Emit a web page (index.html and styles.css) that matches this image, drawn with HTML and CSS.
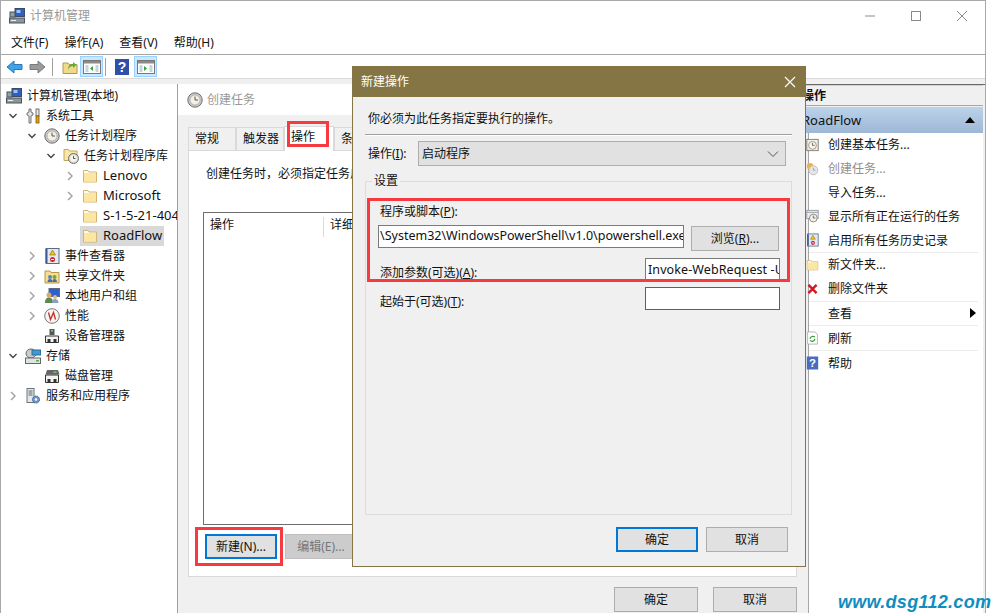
FILE: index.html
```html
<!DOCTYPE html>
<html lang="zh-CN">

<head>
    <meta charset="UTF-8">
    <title>计算机管理</title>
    <link rel="stylesheet" href="styles.css">
</head>

<body>
    <svg class="defs" width="0" height="0">
        <symbol id="computer" viewBox="0 0 16 16">
            <rect x="6" y="0.5" width="9.5" height="8" fill="#2f5fc4" stroke="#3a4a6a" />
            <rect x="7.5" y="2" width="4" height="3" fill="#9cc4f0" />
            <rect x="1" y="4" width="5" height="5" fill="#8fa0a8" stroke="#45545c" />
            <rect x="0.5" y="10" width="15" height="5" fill="#8d979a" stroke="#4c5558" />
            <path d="M2 12.5h5" stroke="#eee" />
        </symbol>
        <symbol id="tools" viewBox="0 0 16 16">
            <path d="M4 1v3l-2 1v2l2 1v7h2V8l2-1V5L6 4V1z" fill="#dfe2e4" stroke="#555" stroke-width=".8" />
            <rect x="11" y="1" width="3" height="7" fill="#e5e7e8" stroke="#555" stroke-width=".8" />
            <rect x="11" y="8" width="3" height="7" fill="#e0a010" stroke="#7a5a10" stroke-width=".8" />
        </symbol>
        <symbol id="clock" viewBox="0 0 16 16">
            <circle cx="8" cy="8" r="7.2" fill="#c9c9c9" stroke="#6f6f6f" />
            <circle cx="8" cy="8" r="5" fill="#f4f1e4" stroke="#999" stroke-width=".6" />
            <path d="M8 4.5V8h3" fill="none" stroke="#555" />
        </symbol>
        <symbol id="folder" viewBox="0 0 16 16">
            <path d="M1.500 2.500h4.500l1 1.500h7.500v10h-13z" fill="#fffbe8" stroke="#d2b570" />
            <rect x="2" y="5" width="12" height="8.500" fill="#fbe6a2" />
        </symbol>
        <symbol id="folderclock" viewBox="0 0 16 16">
            <path d="M1 1.500h4.500l1 1.500h7.500v9.500H1z" fill="#fbe6a2" stroke="#c2a562" />
            <circle cx="10.500" cy="10.500" r="5" fill="#d9d9d9" stroke="#6f6f6f" />
            <circle cx="10.500" cy="10.500" r="3.300" fill="#f7f4e8" />
            <path d="M10.500 8v2.500h2" fill="none" stroke="#555" />
        </symbol>
        <symbol id="taskwin" viewBox="0 0 16 16">
            <rect x="1" y="1" width="14" height="14" fill="#efeee8" stroke="#7a6a58" />
            <circle cx="8" cy="8.500" r="4.800" fill="#f7f4e8" stroke="#8a8a8a" />
            <path d="M8 5.500v3h2.500" fill="none" stroke="#555" />
        </symbol>
        <symbol id="tasksun" viewBox="0 0 16 16">
            <circle cx="5" cy="4.500" r="4" fill="#eeb14a" />
            <circle cx="9" cy="9.500" r="5.500" fill="#e6e6e6" stroke="#b5b5b5" />
            <path d="M9 6.500v3h2.500" fill="none" stroke="#999" />
        </symbol>
        <symbol id="runlist" viewBox="0 0 16 16">
            <rect x="1" y="1" width="14" height="10" fill="#eef1f4" stroke="#8a8f96" />
            <path d="M1 3.500h14" stroke="#8a8f96" />
            <circle cx="9" cy="10.500" r="4.800" fill="#f4f1e4" stroke="#777" />
            <path d="M9 7.500v3h2.500" fill="none" stroke="#555" />
        </symbol>
        <symbol id="event" viewBox="0 0 16 16">
            <rect x="2" y="0.500" width="13" height="15" fill="#e3e9f2" stroke="#5a6a88" />
            <path d="M2.500 1v14" stroke="#3c5a9a" stroke-width="2" />
            <path d="M8.500 2l3 5h-6z" fill="#f0c020" stroke="#8a6a10" stroke-width=".6" />
            <circle cx="8.500" cy="11.500" r="2.500" fill="#c9282d" />
            <path d="M7 11.500h3" stroke="#fff" />
        </symbol>
        <symbol id="share" viewBox="0 0 16 16">
            <path d="M1 3h5l1 1.500h8v10.500H1z" fill="#f7dd8e" stroke="#b8964a" />
            <circle cx="6" cy="9" r="2" fill="#5a86c8" />
            <circle cx="10.500" cy="9" r="2" fill="#6aa84f" />
            <path d="M3.500 14c0-2 1-3 2.500-3s2.500 1 2.500 3zM8.500 14c0-2 .5-3 2-3s2.500 1 2.500 3z" fill="#4a6fa8" />
        </symbol>
        <symbol id="users" viewBox="0 0 16 16">
            <rect x="5" y="0.500" width="10.500" height="8" fill="#2f62c8" stroke="#5a6a88" />
            <circle cx="5" cy="7" r="2.500" fill="#d8a878" />
            <path d="M1 15c0-4 1.500-5.500 4-5.500s4 1.500 4 5.500z" fill="#5d8a4a" />
            <circle cx="11" cy="9" r="2" fill="#e0b890" />
            <path d="M8 15c0-2.500 1-4 3-4s3.500 1.500 3.500 4z" fill="#8aa0c0" />
        </symbol>
        <symbol id="perf" viewBox="0 0 16 16">
            <circle cx="8" cy="8" r="7.300" fill="#f5f5f0" stroke="#777" />
            <path d="M4.500 4.500l2 7 3-7 2 7" fill="none" stroke="#c92a2a" stroke-width="1.300" />
        </symbol>
        <symbol id="device" viewBox="0 0 16 16">
            <rect x="5.500" y="1" width="5" height="6" fill="#555" />
            <rect x="7" y="2" width="2" height="1.500" fill="#7ad07a" />
            <path d="M1.500 8h13v6.500h-13z" fill="#f3f3f3" stroke="#333" />
            <rect x="3.500" y="11" width="3" height="3.500" fill="#333" />
            <rect x="9.500" y="11" width="3" height="3.500" fill="#333" />
        </symbol>
        <symbol id="storage" viewBox="0 0 16 16">
            <ellipse cx="6" cy="5.500" rx="5" ry="4.500" fill="#c8ced0" stroke="#666" />
            <rect x="7" y="2" width="8.500" height="5" fill="#3d9ad0" stroke="#2b6f9a" />
            <rect x="0.500" y="10" width="15" height="5.500" fill="#dfe3e4" stroke="#666" />
            <rect x="11" y="12" width="3" height="1.500" fill="#55b055" />
        </symbol>
        <symbol id="disk" viewBox="0 0 16 16">
            <path d="M3 2h11l1.500 4.500H1.500z" fill="#666" />
            <rect x="9.500" y="3.500" width="3" height="1.300" fill="#7ad07a" />
            <path d="M1.500 7h13v7.500h-13z" fill="#f3f3f3" stroke="#333" />
            <rect x="3.500" y="11" width="3" height="3.500" fill="#333" />
            <rect x="9.500" y="11" width="3" height="3.500" fill="#333" />
        </symbol>
        <symbol id="services" viewBox="0 0 16 16">
            <rect x="2" y="0.500" width="7" height="14" fill="#e4e8ea" stroke="#6a7478" />
            <path d="M3.500 3h4M3.500 5h4M3.500 7h4" stroke="#5a6468" />
            <circle cx="11" cy="11.500" r="3.500" fill="#6d97c9" stroke="#3e5f8c" stroke-dasharray="1.500 .6" />
            <circle cx="11" cy="11.500" r="1.200" fill="#fff" />
        </symbol>
        <symbol id="chev" viewBox="0 0 10 10">
            <path d="M1.500 3L5 6.500 8.500 3" fill="none" stroke="#444" stroke-width="1.400" />
        </symbol>
        <symbol id="chevr" viewBox="0 0 10 10">
            <path d="M3 1l4 4-4 4" fill="none" stroke="#a6a6a6" stroke-width="1.500" />
        </symbol>
    </svg>

    <div class="window">
        <div class="titlebar">
            <svg class="ico"><use href="#computer" /></svg>
            <span class="title-text">计算机管理</span>
            <div class="win-ctrls">
                <svg width="12" height="12" viewBox="0 0 12 12"><path d="M1 6h10" stroke="#8a8a8a" /></svg>
                <svg width="12" height="12" viewBox="0 0 12 12"><rect x="1.500" y="1.500" width="9" height="9" fill="none" stroke="#8a8a8a" /></svg>
                <svg width="12" height="12" viewBox="0 0 12 12"><path d="M1 1l10 10M11 1L1 11" stroke="#8a8a8a" /></svg>
            </div>
        </div>
        <div class="menubar">
            <span>文件(F)</span>
            <span>操作(A)</span>
            <span>查看(V)</span>
            <span>帮助(H)</span>
        </div>
        <div class="toolbar">
            <svg class="tb-arrow" viewBox="0 0 17 14"><path d="M1 7l7-6v3.500h8v5H8V13z" fill="#3ea3e8" stroke="#2a78b8" /></svg>
            <svg class="tb-arrow" viewBox="0 0 17 14"><path d="M16 7L9 1v3.500H1v5h8V13z" fill="#9a9a9a" stroke="#7a7a7a" /></svg>
            <i class="tb-sep"></i>
            <svg class="ico tb-up" viewBox="0 0 16 16"><path d="M1 4h5l1 1.500h8v9H1z" fill="#f2d98a" stroke="#b09a50" /><path d="M6 11c0-4 2-6 5-6V3l3.500 3L11 9V7c-2 0-4 1-5 4z" fill="#5cae3c" /></svg>
            <div class="tb-btn">
                <svg width="18" height="14" viewBox="0 0 18 14"><rect x=".5" y=".5" width="17" height="13" fill="#fff" stroke="#777" /><rect x="1" y="1" width="16" height="2.500" fill="#8a8a8a" /><rect x="2.500" y="5" width="3" height="7" fill="#c8d4dc" /><rect x="12.500" y="5" width="3" height="7" fill="#c8d4dc" /><path d="M10 6v5L7 8.500z" fill="#3aa03a" /></svg>
            </div>
            <i class="tb-sep tb-sep2"></i>
            <svg class="tb-help" viewBox="0 0 14 16"><rect width="14" height="16" fill="#2f4fa8" /><text x="7" y="13" text-anchor="middle" class="help-q">?</text></svg>
            <div class="tb-btn tb-btn2">
                <svg width="18" height="14" viewBox="0 0 18 14"><rect x=".5" y=".5" width="17" height="13" fill="#fff" stroke="#777" /><rect x="1" y="1" width="16" height="2.500" fill="#8a8a8a" /><rect x="2.500" y="5" width="3" height="7" fill="#c8d4dc" /><rect x="12.500" y="5" width="3" height="7" fill="#c8d4dc" /><path d="M7 6v5l3-2.500z" fill="#3aa03a" /></svg>
            </div>
        </div>

        <div class="panes">
            <div class="tree">
                <div class="node l0"><svg class="ico"><use href="#computer" /></svg><span>计算机管理(本地)</span></div>
                <div class="node l1"><svg class="chev"><use href="#chev" /></svg><svg class="ico"><use href="#tools" /></svg><span>系统工具</span></div>
                <div class="node l2"><svg class="chev"><use href="#chev" /></svg><svg class="ico"><use href="#clock" /></svg><span>任务计划程序</span></div>
                <div class="node l3"><svg class="chev"><use href="#chev" /></svg><svg class="ico"><use href="#folderclock" /></svg><span>任务计划程序库</span></div>
                <div class="node l4"><svg class="chev"><use href="#chevr" /></svg><svg class="ico"><use href="#folder" /></svg><span class="lat">Lenovo</span></div>
                <div class="node l4"><svg class="chev"><use href="#chevr" /></svg><svg class="ico"><use href="#folder" /></svg><span class="lat">Microsoft</span></div>
                <div class="node l4"><i class="chev"></i><svg class="ico"><use href="#folder" /></svg><span class="lat">S-1-5-21-404</span></div>
                <div class="node l4"><i class="chev"></i><div class="sel"><svg class="ico"><use href="#folder" /></svg><span class="lat">RoadFlow</span></div></div>
                <div class="node l2"><svg class="chev"><use href="#chevr" /></svg><svg class="ico"><use href="#event" /></svg><span>事件查看器</span></div>
                <div class="node l2"><svg class="chev"><use href="#chevr" /></svg><svg class="ico"><use href="#share" /></svg><span>共享文件夹</span></div>
                <div class="node l2"><svg class="chev"><use href="#chevr" /></svg><svg class="ico"><use href="#users" /></svg><span>本地用户和组</span></div>
                <div class="node l2"><svg class="chev"><use href="#chevr" /></svg><svg class="ico"><use href="#perf" /></svg><span>性能</span></div>
                <div class="node l2"><i class="chev"></i><svg class="ico"><use href="#device" /></svg><span>设备管理器</span></div>
                <div class="node l1"><svg class="chev"><use href="#chev" /></svg><svg class="ico"><use href="#storage" /></svg><span>存储</span></div>
                <div class="node l2"><i class="chev"></i><svg class="ico"><use href="#disk" /></svg><span>磁盘管理</span></div>
                <div class="node l1"><svg class="chev"><use href="#chevr" /></svg><svg class="ico"><use href="#services" /></svg><span>服务和应用程序</span></div>
            </div>

            <div class="middle">
                <div class="mid-head">
                    <svg class="ico"><use href="#clock" /></svg>
                    <span>创建任务</span>
                </div>
                <div class="tabs">
                    <span class="tab">常规</span>
                    <span class="tab">触发器</span>
                    <span class="tab active">操作</span>
                    <span class="tab">条件</span>
                </div>
                <div class="tab-panel">
                    <p class="panel-text">创建任务时，必须指定任务启</p>
                    <div class="list">
                        <div class="list-head">
                            <span class="col-a">操作</span>
                            <span class="col-b">详细信息</span>
                        </div>
                    </div>
                    <div class="list-btns">
                        <button class="btn btn-focus new-btn">新建(N)...</button>
                        <button class="btn btn-off">编辑(E)...</button>
                    </div>
                </div>
                <div class="mid-foot">
                    <button class="btn foot-btn">确定</button>
                    <button class="btn foot-btn">取消</button>
                </div>
            </div>

            <div class="actions">
                <div class="act-head">操作</div>
                <div class="act-group"><span class="lat">RoadFlow</span><i class="up-tri"></i></div>
                <div class="act-list">
                    <div class="act"><svg class="ico"><use href="#taskwin" /></svg><span>创建基本任务...</span></div>
                    <div class="act muted"><svg class="ico"><use href="#tasksun" /></svg><span>创建任务...</span></div>
                    <div class="act"><i class="ico"></i><span>导入任务...</span></div>
                    <div class="act"><svg class="ico"><use href="#runlist" /></svg><span>显示所有正在运行的任务</span></div>
                    <div class="act"><svg class="ico"><use href="#event" /></svg><span>启用所有任务历史记录</span></div>
                    <i class="act-sep"></i>
                    <div class="act"><svg class="ico"><use href="#folder" /></svg><span>新文件夹...</span></div>
                    <div class="act"><svg class="ico" viewBox="0 0 16 16"><path d="M3 3l10 10M13 3L3 13" stroke="#d01c24" stroke-width="3" /></svg><span>删除文件夹</span></div>
                    <i class="act-sep"></i>
                    <div class="act"><i class="ico"></i><span>查看</span><i class="more-tri"></i></div>
                    <i class="act-sep"></i>
                    <div class="act"><svg class="ico" viewBox="0 0 16 16"><path d="M2 .5h9l3 3v12H2z" fill="#fff" stroke="#aaa" /><path d="M5 9a3.500 3.500 0 0 1 6-2M11 9a3.500 3.500 0 0 1-6 2" fill="none" stroke="#3aa03a" stroke-width="1.500" /></svg><span>刷新</span></div>
                    <i class="act-sep"></i>
                    <div class="act"><svg class="ico" viewBox="0 0 16 16"><rect x="1" width="14" height="16" fill="#4a6cc0" /><text x="8" y="13" text-anchor="middle" class="help-q">?</text></svg><span>帮助</span></div>
                </div>
            </div>
        </div>

        <!-- 红框标注 -->
        <i class="mark mark-tab"></i>
        <i class="mark mark-new"></i>

        <div class="dialog">
            <div class="dlg-title">
                <span>新建操作</span>
                <svg width="12" height="12" viewBox="0 0 12 12"><path d="M1 1l10 10M11 1L1 11" stroke="#fff" stroke-width="1.200" /></svg>
            </div>
            <div class="dlg-body">
                <p class="dlg-intro">你必须为此任务指定要执行的操作。</p>
                <hr class="dlg-rule">
                <div class="dlg-op">
                    <label>操作(<u>I</u>):</label>
                    <div class="select"><span>启动程序</span><svg width="12" height="8" viewBox="0 0 12 8"><path d="M1 1.500l5 5 5-5" fill="none" stroke="#555" /></svg></div>
                </div>
                <fieldset class="settings">
                    <legend>设置</legend>
                    <div class="field-label">程序或脚本(<u>P</u>):</div>
                    <div class="prog-row">
                        <div class="tinput prog-input">\System32\WindowsPowerShell\v1.0\powershell.exe</div>
                        <button class="btn browse">浏览(<u>R</u>)...</button>
                    </div>
                    <div class="pair-row">
                        <div class="field-label">添加参数(可选)(<u>A</u>):</div>
                        <div class="tinput short">Invoke-WebRequest -U</div>
                    </div>
                    <div class="pair-row">
                        <div class="field-label">起始于(可选)(<u>T</u>):</div>
                        <div class="tinput short focused"></div>
                    </div>
                </fieldset>
                <div class="dlg-foot">
                    <button class="btn btn-focus foot-btn2">确定</button>
                    <button class="btn foot-btn2">取消</button>
                </div>
            </div>
            <i class="mark mark-fields"></i>
        </div>
    </div>

    <div class="watermark">www.dsg112.com</div>
</body>

</html>
```

FILE: styles.css
```css
* {
    box-sizing: border-box;
}

html,
body {
    margin: 0;
    height: 100%;
    background: #fff;
    overflow: hidden;
}

body {
    font: 12px/16px "Noto Sans", "Noto Sans CJK SC", sans-serif;
    color: #111;
}

.defs {
    position: absolute;
}

.lat {
    font-size: 13px;
}

p {
    margin: 0;
}

u {
    text-decoration: underline;
}

.ico {
    display: block;
    width: 16px;
    height: 16px;
    flex: none;
}

.window {
    position: relative;
    width: 986px;
    height: 613px;
    border: 1px solid #a9a9a9;
    border-bottom: 0;
    overflow: hidden;
    display: flex;
    flex-direction: column;
}

.titlebar {
    height: 29px;
    flex: none;
    display: flex;
    align-items: center;
    padding-left: 8px;
}

.title-text {
    margin-left: 5px;
    color: #999;
}

.win-ctrls {
    margin-left: auto;
    display: flex;
    gap: 34px;
    padding-right: 17px;
}

.menubar {
    height: 25px;
    flex: none;
    display: flex;
    gap: 16px;
    align-items: center;
    padding: 1px 0 0 10px;
    border-bottom: 1px solid #a6a6a6;
}

.toolbar {
    height: 24px;
    flex: none;
    display: flex;
    align-items: center;
    padding-left: 5px;
    border-bottom: 1px solid #d9d9d9;
}

.tb-arrow {
    width: 17px;
    height: 14px;
    margin-right: 6px;
}

.tb-sep {
    width: 1px;
    height: 18px;
    background: #a0a0a0;
    margin-left: 0;
}

.tb-up {
    margin-left: 9px;
    margin-right: 2px;
}

.tb-btn {
    width: 23px;
    height: 21px;
    background: #cce8ff;
    border: 1px solid #99d1ff;
    display: flex;
    align-items: center;
    justify-content: center;
}

.tb-sep2 {
    margin-left: 2px;
}

.tb-help {
    width: 14px;
    height: 16px;
    margin-left: 9px;
}

.help-q {
    font: bold 14px "Liberation Sans", sans-serif;
    fill: #fff;
}

.tb-btn2 {
    margin-left: 5px;
}

.panes {
    flex: 1;
    min-height: 0;
    margin-top: 0;
    display: flex;
    background: #f0f0f0;
    padding-top: 5px;
}

.tree {
    width: 177px;
    flex: none;
    background: #fff;
    border-right: 1px solid #a0a0a0;
    padding-top: 2px;
    overflow: hidden;
    white-space: nowrap;
}

.node {
    height: 20px;
    display: flex;
    align-items: center;
}

.node .lat {
    margin-top: -2px;
}

.chev {
    display: block;
    width: 10px;
    height: 10px;
    margin: 0 7px 0 4px;
    flex: none;
}

.node .ico {
    margin-right: 5px;
}

.sel {
    display: flex;
    align-items: center;
    height: 20px;
    width: 84px;
    margin-left: -2px;
    padding-left: 2px;
    background: #d9d9d9;
}

.l0 {
    padding-left: 5px;
}

.l1 {
    padding-left: 3px;
}

.l2 {
    padding-left: 22px;
}

.l3 {
    padding-left: 41px;
}

.l4 {
    padding-left: 60px;
}

.middle {
    width: 620px;
    flex: none;
    display: flex;
    flex-direction: column;
}

.mid-head {
    height: 31px;
    flex: none;
    background: #fff;
    display: flex;
    align-items: center;
    gap: 4px;
    padding: 1px 0 0 9px;
    color: #999;
}

.tabs {
    display: flex;
    align-items: flex-end;
    height: 35px;
    padding-left: 10px;
    flex: none;
}

.tab {
    height: 23px;
    width: 48px;
    padding: 3px 0 0 6px;
    border: 1px solid #d9d9d9;
    border-bottom: 0;
    background: #f0f0f0;
    white-space: nowrap;
    overflow: hidden;
}

.tab.active {
    height: 25px;
    width: 50px;
    padding-top: 2px;
    background: #fff;
    margin-bottom: -1px;
    position: relative;
}

.tab:last-child {
    width: 60px;
}

.tab-panel {
    height: 427px;
    flex: none;
    margin: 0 0 0 10px;
    width: 609px;
    background: #fff;
    border: 1px solid #d9d9d9;
    padding: 15px 14px 0 14px;
}

.panel-text {
    padding-left: 3px;
}

.list {
    height: 313px;
    margin-top: 30px;
    border: 1px solid #6d6d6d;
}

.list-head {
    display: flex;
    height: 24px;
    padding-top: 4px;
}

.col-a {
    width: 120px;
    padding-left: 6px;
    border-right: 1px solid #d9d9d9;
}

.col-b {
    padding-left: 6px;
}

.list-btns {
    display: flex;
    gap: 8px;
    margin-top: 9px;
    padding-left: 2px;
}

.btn {
    font: inherit;
    color: #111;
    padding: 0;
    height: 25px;
    background: #e1e1e1;
    border: 1px solid #adadad;
}

.btn-focus {
    border: 2px solid #0078d7;
}

.new-btn {
    width: 72px;
}

.btn-off {
    width: 72px;
    background: #cccccc;
    border-color: #bfbfbf;
    color: #777;
}

.mid-foot {
    display: flex;
    gap: 15px;
    justify-content: flex-end;
    padding: 10px 1px 0 0;
}

.foot-btn {
    width: 84px;
    height: 25px;
}

.actions {
    flex: 1;
    min-width: 0;
    padding-right: 2px;
    border-top: 1px solid #696969;
    display: flex;
    flex-direction: column;
}

.act-head {
    height: 21px;
    padding: 2px 0 0 4px;
    font-weight: 700;
    border-top: 1px solid #d0d0d0;
    border-bottom: 1px solid #a6a6a6;
}

.act-group {
    height: 26px;
    margin-top: 1px;
    background: linear-gradient(#bcd2ea, #9db7d6);
    display: flex;
    align-items: center;
    padding: 0 6px 0 4px;
    justify-content: space-between;
}

.up-tri {
    border: 5px solid transparent;
    border-top: 0;
    border-bottom: 6px solid #000;
    margin-right: 2px;
}

.act-list {
    flex: 1;
    background: #fff;
    margin-left: 10px;
    border-left: 1px solid #a6a6a6;
}

.act {
    height: 23.8px;
    display: flex;
    align-items: center;
}

.act span {
    padding-top: 1px;
}

.act .ico {
    width: 13px;
    height: 14px;
    margin: 0 9px 0 -3px;
}

.muted {
    color: #8f8f8f;
}

.more-tri {
    margin-left: auto;
    margin-right: 7px;
    border: 5px solid transparent;
    border-right: 0;
    border-left: 6px solid #000;
}

.act-sep {
    display: block;
    height: 1px;
    margin: 0 5px 0 0;
    background: #ececec;
}

.mark {
    position: absolute;
    border: 3px solid #f63a3f;
    z-index: 3;
}

.mark-tab {
    left: 286px;
    top: 120px;
    width: 42px;
    height: 26px;
}

.mark-new {
    left: 194px;
    top: 526px;
    width: 88px;
    height: 39px;
}

.dialog {
    position: absolute;
    left: 351px;
    top: 65px;
    width: 454px;
    height: 501px;
    background: #f0f0f0;
    border: 1px solid #857545;
    z-index: 2;
}

.dlg-title {
    height: 31px;
    margin: -1px -1px 0;
    background: #857545;
    color: #fff;
    display: flex;
    align-items: center;
    justify-content: space-between;
    padding: 1px 10px 0 9px;
}

.dlg-body {
    padding: 14px 13px 0 12px;
}

.dlg-intro {
    padding-left: 3px;
}

.dlg-rule {
    height: 2px;
    margin: 7px 0 0;
    border: 0;
    border-top: 1px solid #a0a0a0;
    border-bottom: 1px solid #fff;
}

.dlg-op {
    display: flex;
    align-items: center;
    margin-top: 5px;
    padding-left: 3px;
}

.dlg-op label {
    width: 50px;
    padding-top: 1px;
}

.select {
    width: 368px;
    height: 25px;
    background: #e1e1e1;
    border: 1px solid #adadad;
    display: flex;
    align-items: center;
    justify-content: space-between;
    padding: 1px 6px 0 3px;
}

.settings {
    margin: 7px 0 0;
    padding: 14px 0 0 12px;
    height: 342px;
    min-width: 0;
    border: 1px solid #dcdcdc;
}

.settings legend {
    margin-left: -6px;
    padding: 0 2px;
    line-height: 16px;
}

.field-label {
    height: 16px;
    padding: 1px 0 0 2px;
}

.prog-row {
    display: flex;
    align-items: flex-start;
    margin-top: 6px;
}

.tinput {
    height: 23px;
    background: #fff;
    border: 1px solid #7a7a7a;
    padding: 2px 0 0 2px;
    overflow: hidden;
    white-space: nowrap;
    font-size: 12.5px;
}

.prog-input {
    width: 306px;
    padding-left: 1px;
}

.browse {
    width: 88px;
    margin: 1px 0 0 7px;
}

.pair-row {
    display: flex;
    justify-content: space-between;
    margin-top: 7px;
    padding-right: 11px;
}

.pair-row .field-label {
    margin-top: 6px;
}

.pair-row + .pair-row {
    margin-top: 6px;
}

.short {
    width: 135px;
    padding-top: 3px;
    letter-spacing: .1px;
}

.focused {
    border-color: #0078d7;
}

.dlg-foot {
    display: flex;
    justify-content: flex-end;
    gap: 8px;
    margin-top: 12px;
    padding-right: 4px;
}

.foot-btn2 {
    width: 82px;
}

.mark-fields {
    left: 14px;
    top: 131px;
    width: 423px;
    height: 84px;
}

.watermark {
    position: absolute;
    left: 838px;
    top: 591px;
    font: italic 700 18px/22px "Liberation Sans", sans-serif;
    letter-spacing: .3px;
    color: #0e8ebf;
    white-space: nowrap;
}
```
